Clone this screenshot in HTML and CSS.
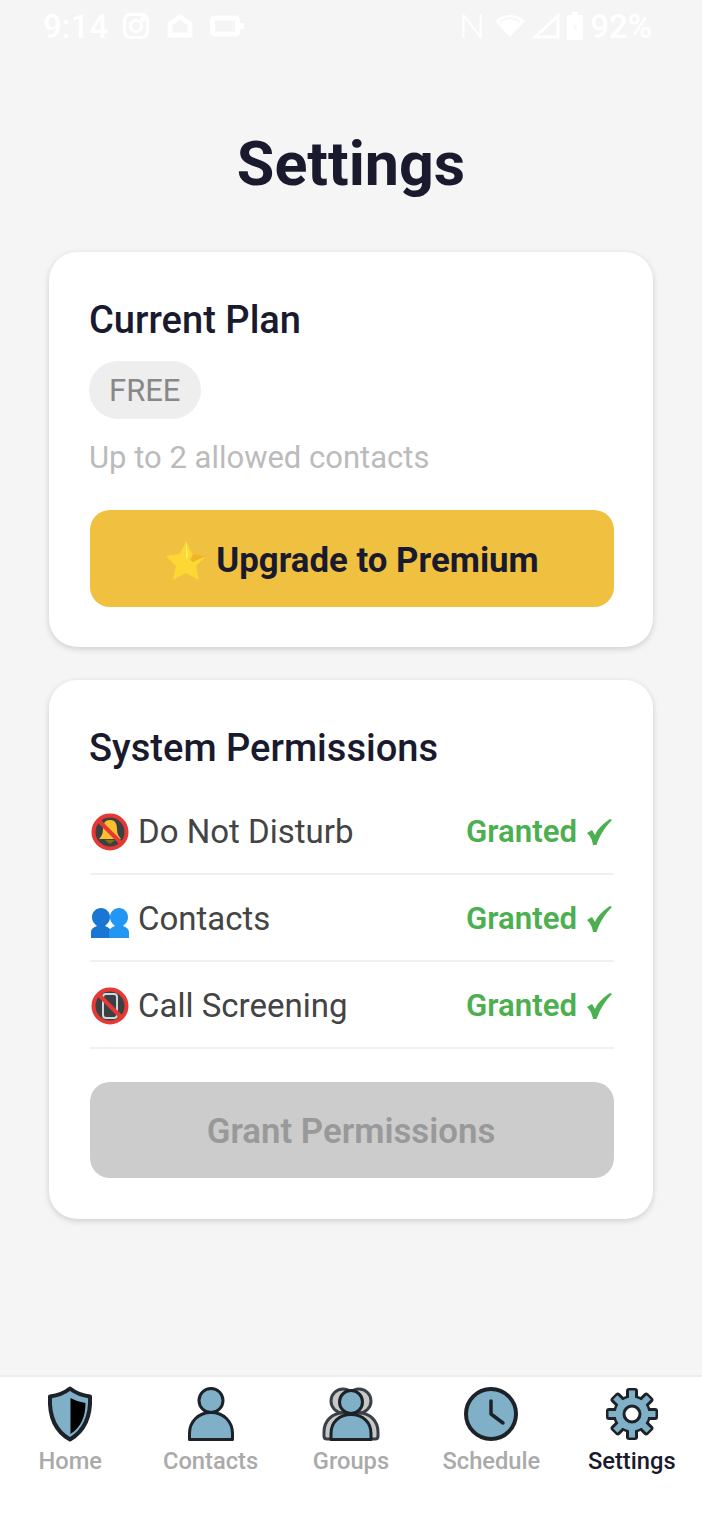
FILE: index.html
```html
<!DOCTYPE html>
<html lang="en">
<head>
    <meta charset="UTF-8">
    <meta name="viewport" content="width=device-width, initial-scale=1.0">
    <title>Settings</title>
    <link rel="stylesheet" href="styles.css">
</head>
<body>
    <div class="status-bar">
        <div class="status-group">
            <span class="status-text time">9:14</span>
            <svg width="28" height="28" viewBox="0 0 28 28" fill="none" stroke="#fff" stroke-width="3"><rect x="2.5" y="2.5" width="23" height="23" rx="6"/><circle cx="14" cy="14" r="5.5"/><circle cx="21" cy="7" r="1" fill="#fff"/></svg>
            <svg width="26" height="26" viewBox="0 0 26 26" fill="none" stroke="#fff" stroke-width="5"><path d="M3 22V11l10-7 10 7v11z"/></svg>
            <svg width="34" height="26" viewBox="0 0 34 26" fill="none" stroke="#fff" stroke-width="5"><rect x="2.5" y="5" width="25" height="16" rx="2"/><path d="M30 10h4v6h-4z" fill="#fff" stroke="none"/></svg>
        </div>
        <div class="status-group right">
            <svg class="nfc" width="20" height="26" viewBox="0 0 20 26" fill="none" stroke="#fff" stroke-width="2"><path d="M1.5 25V2l17 22V1"/></svg>
            <svg width="30" height="26" viewBox="0 0 30 26" fill="#fff"><path d="M15 24L0 8c8-8 22-8 30 0z"/><path d="M5 9c6-5 14-5 20 0" fill="none" stroke="#f5f5f5" stroke-width="1.5"/></svg>
            <svg width="28" height="26" viewBox="0 0 28 26" fill="none" stroke="#fff" stroke-width="3"><path d="M3 24L26 3v21z"/></svg>
            <svg width="16" height="28" viewBox="0 0 16 28" fill="#fff"><path d="M5 0h6v3h5v25H0V3h5z"/><path d="M9 9l-3 6h2l-1 5 3-6H8z" fill="#f5f5f5"/></svg>
            <span class="status-text">92%</span>
        </div>
    </div>

    <main class="content">
        <h1>Settings</h1>

        <section class="card plan-card">
            <h2>Current Plan</h2>
            <span class="plan-badge">FREE</span>
            <p class="plan-note">Up to 2 allowed contacts</p>
            <button class="btn btn-upgrade">
                <svg class="star" width="42" height="42" viewBox="0 0 42 42"><path d="M21 2l6 13 14 2-10 10 3 14-13-7-13 7 3-14L1 17l14-2z" fill="#fdd835"/><path d="M21 2l2 15-2 3z" fill="#ffee75"/><path d="M41 17l-13 6-3-2 3-6z" fill="#f0b429"/></svg>
                Upgrade to Premium
            </button>
        </section>

        <section class="card perm-card">
            <h2>System Permissions</h2>
            <div class="perm-row">
                <span class="perm-name">
                    <svg class="perm-icon" width="40" height="40" viewBox="0 0 40 40"><circle cx="20" cy="20" r="16.5" fill="#3c4043" stroke="#e53935" stroke-width="4"/><path d="M20 8c-6 0-7 5-7 9 0 5-2 8-4 10h22c-2-2-4-5-4-10 0-4-1-9-7-9z" fill="#fbc02d"/><path d="M15 28h10l-5 4z" fill="#8d6e00"/><path d="M8 8l24 24" stroke="#e53935" stroke-width="4"/></svg>
                    Do Not Disturb
                </span>
                <span class="perm-status">Granted <svg class="check" width="26" height="28" viewBox="0 0 26 28"><path d="M1 15l5-3 3 5C12 10 18 5 24 1l2 1C19 9 14 17 10.500 27H7C6 21 4 18 1 15z"/></svg></span>
            </div>
            <div class="perm-row">
                <span class="perm-name">
                    <svg class="perm-icon" width="40" height="40" viewBox="0 0 40 40"><path d="M1 39v-6c0-3 3-5 6-6-2-2-5-4-5-9 0-5 4-9 9-9s9 4 9 9c0 5-3 7-5 9 3 1 6 3 6 6v6z" fill="#1976d2"/><path d="M19 39v-6c0-3 3-5 6-6-2-2-5-4-5-9 0-5 4-9 9-9s9 4 9 9c0 5-3 7-5 9 3 1 6 3 6 6v6z" fill="#2196f3"/></svg>
                    Contacts
                </span>
                <span class="perm-status">Granted <svg class="check" width="26" height="28" viewBox="0 0 26 28"><path d="M1 15l5-3 3 5C12 10 18 5 24 1l2 1C19 9 14 17 10.500 27H7C6 21 4 18 1 15z"/></svg></span>
            </div>
            <div class="perm-row">
                <span class="perm-name">
                    <svg class="perm-icon" width="40" height="40" viewBox="0 0 40 40"><circle cx="20" cy="20" r="16.5" fill="#3c4043" stroke="#e53935" stroke-width="4"/><rect x="13" y="8" width="14" height="24" rx="3" fill="none" stroke="#cfd8dc" stroke-width="2"/><path d="M8 8l24 24" stroke="#e53935" stroke-width="4"/></svg>
                    Call Screening
                </span>
                <span class="perm-status">Granted <svg class="check" width="26" height="28" viewBox="0 0 26 28"><path d="M1 15l5-3 3 5C12 10 18 5 24 1l2 1C19 9 14 17 10.500 27H7C6 21 4 18 1 15z"/></svg></span>
            </div>
            <button class="btn btn-disabled">Grant Permissions</button>
        </section>
    </main>

    <nav class="tab-bar">
        <div class="tab">
            <svg width="50" height="58" viewBox="0 0 50 58"><path d="M25 3.5c5 4 12 7 20 8 1 20-5 34-20 43C10 46 4 31 5 11.500c8-1 15-4 20-8z" fill="#7fb0c7" stroke="#1c2228" stroke-width="4" stroke-linejoin="round"/><path d="M25.500 13c4 2 9 4 15 5 0 13-4 24-15 31z" fill="#000"/></svg>
            <span>Home</span>
        </div>
        <div class="tab">
            <svg width="50" height="58" viewBox="0 0 50 58"><circle cx="25" cy="15.5" r="12" fill="#7fb0c7" stroke="#1c2228" stroke-width="3"/><path d="M3.5 54.5v-6c0-12 9-21 21.5-21s21.5 9 21.5 21v6z" fill="#7fb0c7" stroke="#1c2228" stroke-width="3" stroke-linejoin="round"/></svg>
            <span>Contacts</span>
        </div>
        <div class="tab">
            <svg width="60" height="58" viewBox="0 0 60 58">
                <g fill="#c8c8c8" stroke="#3a4046" stroke-width="3" stroke-linejoin="round">
                    <circle cx="22" cy="16" r="12"/>
                    <circle cx="38" cy="16" r="12"/>
                    <path d="M3 51v-4c0-11 8-19 19-19s19 8 19 19v4c0 2-1 3-3 3H6c-2 0-3-1-3-3z"/>
                    <path d="M19 51v-4c0-11 8-19 19-19s19 8 19 19v4c0 2-1 3-3 3H22c-2 0-3-1-3-3z"/>
                </g>
                <circle cx="30" cy="17" r="11.5" fill="#7fb0c7" stroke="#1c2228" stroke-width="3"/>
                <path d="M10 54.5v-6c0-11 8-19 20-19s20 8 20 19v6z" fill="#7fb0c7" stroke="#1c2228" stroke-width="3" stroke-linejoin="round"/>
            </svg>
            <span>Groups</span>
        </div>
        <div class="tab">
            <svg width="56" height="58" viewBox="0 0 56 58"><circle cx="28" cy="29" r="25" fill="#7fb0c7" stroke="#1c2228" stroke-width="4"/><path d="M28 16v13l12 9" fill="none" stroke="#1c2228" stroke-width="3.5" stroke-linecap="round" stroke-linejoin="round"/></svg>
            <span>Schedule</span>
        </div>
        <div class="tab active">
            <svg width="56" height="58" viewBox="0 0 56 58">
                <g fill="#1c2228">
                    <rect x="22" y="3" width="12" height="52" rx="3"/>
                    <rect x="22" y="3" width="12" height="52" rx="3" transform="rotate(45 28 29)"/>
                    <rect x="22" y="3" width="12" height="52" rx="3" transform="rotate(90 28 29)"/>
                    <rect x="22" y="3" width="12" height="52" rx="3" transform="rotate(135 28 29)"/>
                    <circle cx="28" cy="29" r="19"/>
                </g>
                <g fill="#7fb0c7">
                    <rect x="25" y="5.5" width="6" height="47"/>
                    <rect x="25" y="5.5" width="6" height="47" transform="rotate(45 28 29)"/>
                    <rect x="25" y="5.5" width="6" height="47" transform="rotate(90 28 29)"/>
                    <rect x="25" y="5.5" width="6" height="47" transform="rotate(135 28 29)"/>
                    <circle cx="28" cy="29" r="16.5"/>
                </g>
                <circle cx="28" cy="29" r="8" fill="#fff" stroke="#1c2228" stroke-width="3"/>
            </svg>
            <span>Settings</span>
        </div>
    </nav>
</body>
</html>
```

FILE: styles.css
```css
* {
    box-sizing: border-box;
}
body {
    margin: 0;
    height: 1515px;
    display: flex;
    flex-direction: column;
    background-color: #f5f5f5;
    font-family: Roboto, "Liberation Sans", sans-serif;
    overflow: hidden;
}
.status-bar {
    display: flex;
    justify-content: space-between;
    align-items: center;
    height: 52px;
    padding: 0 50px 0 43px;
}
.status-group {
    display: flex;
    align-items: center;
    gap: 17px;
}
.status-group.right {
    gap: 7px;
}
.status-text {
    color: #fff;
    font-size: 33px;
    font-weight: 500;
}
.time {
    margin-right: -3px;
}
.nfc {
    margin-right: 6px;
}
.content {
    flex: 1;
    padding: 0 49px;
}
h1 {
    margin: 72px 0 48px;
    text-align: center;
    color: #1a1a2e;
    font-size: 61px;
    line-height: 80px;
    font-weight: 700;
}
.card {
    background-color: white;
    border-radius: 28px;
    padding: 40px 39px 40px 41px;
    margin-bottom: 33px;
    box-shadow: 0 2px 6px rgba(0, 0, 0, 0.16);
}
h2 {
    margin: 0 0 0 -1px;
    color: #1a1a2e;
    font-size: 38.1px;
    line-height: 56px;
    font-weight: 500;
}
.plan-card h2 {
    margin-bottom: 13px;
}
.perm-card {
    padding-bottom: 41px;
}
.perm-card h2 {
    margin-bottom: 12px;
}
.plan-badge {
    display: inline-block;
    margin-left: -1px;
    padding: 0 21px 0 20px;
    height: 58px;
    line-height: 60px;
    border-radius: 29px;
    background-color: #eeeeee;
    color: #888;
    font-size: 31px;
}
.plan-note {
    margin: 15px 0 28px -1px;
    color: #bbb;
    font-size: 31px;
    line-height: 48px;
}
.btn {
    display: flex;
    justify-content: center;
    align-items: center;
    width: 100%;
    height: 97px;
    padding: 2px 0 0;
    border: 0;
    border-radius: 20px;
    font-family: inherit;
    font-size: 34.8px;
    font-weight: 700;
}
.btn-upgrade {
    background-color: #f0c040;
    color: #1a1a2e;
    gap: 9px;
}
.btn-disabled {
    height: 96px;
    margin-top: 33px;
    padding: 2px 2px 0 0;
    background-color: #cccccc;
    color: #999;
    font-weight: 600;
}
.perm-row {
    display: flex;
    justify-content: space-between;
    align-items: center;
    height: 87px;
    padding-top: 2px;
    border-bottom: 2px solid #f0f0f0;
}
.perm-name {
    display: flex;
    align-items: center;
    gap: 8px;
    color: #444;
    font-size: 33px;
}
.perm-icon {
    flex: none;
}
.perm-status {
    display: flex;
    align-items: center;
    gap: 9px;
    margin-right: 2px;
    color: #4caf50;
    font-size: 31.2px;
    font-weight: 600;
}
.check {
    fill: #4caf50;
}
.tab-bar {
    display: flex;
    justify-content: space-around;
    height: 140px;
    padding-top: 8px;
    background-color: white;
    border-top: 2px solid #eeeeee;
}
.tab {
    display: flex;
    flex-direction: column;
    align-items: center;
    width: 140px;
    color: #aaa;
    font-size: 23.7px;
    font-weight: 500;
}
.tab span {
    line-height: 34px;
    margin-top: 1px;
}
.tab.active {
    color: #1a1a2e;
}
```
